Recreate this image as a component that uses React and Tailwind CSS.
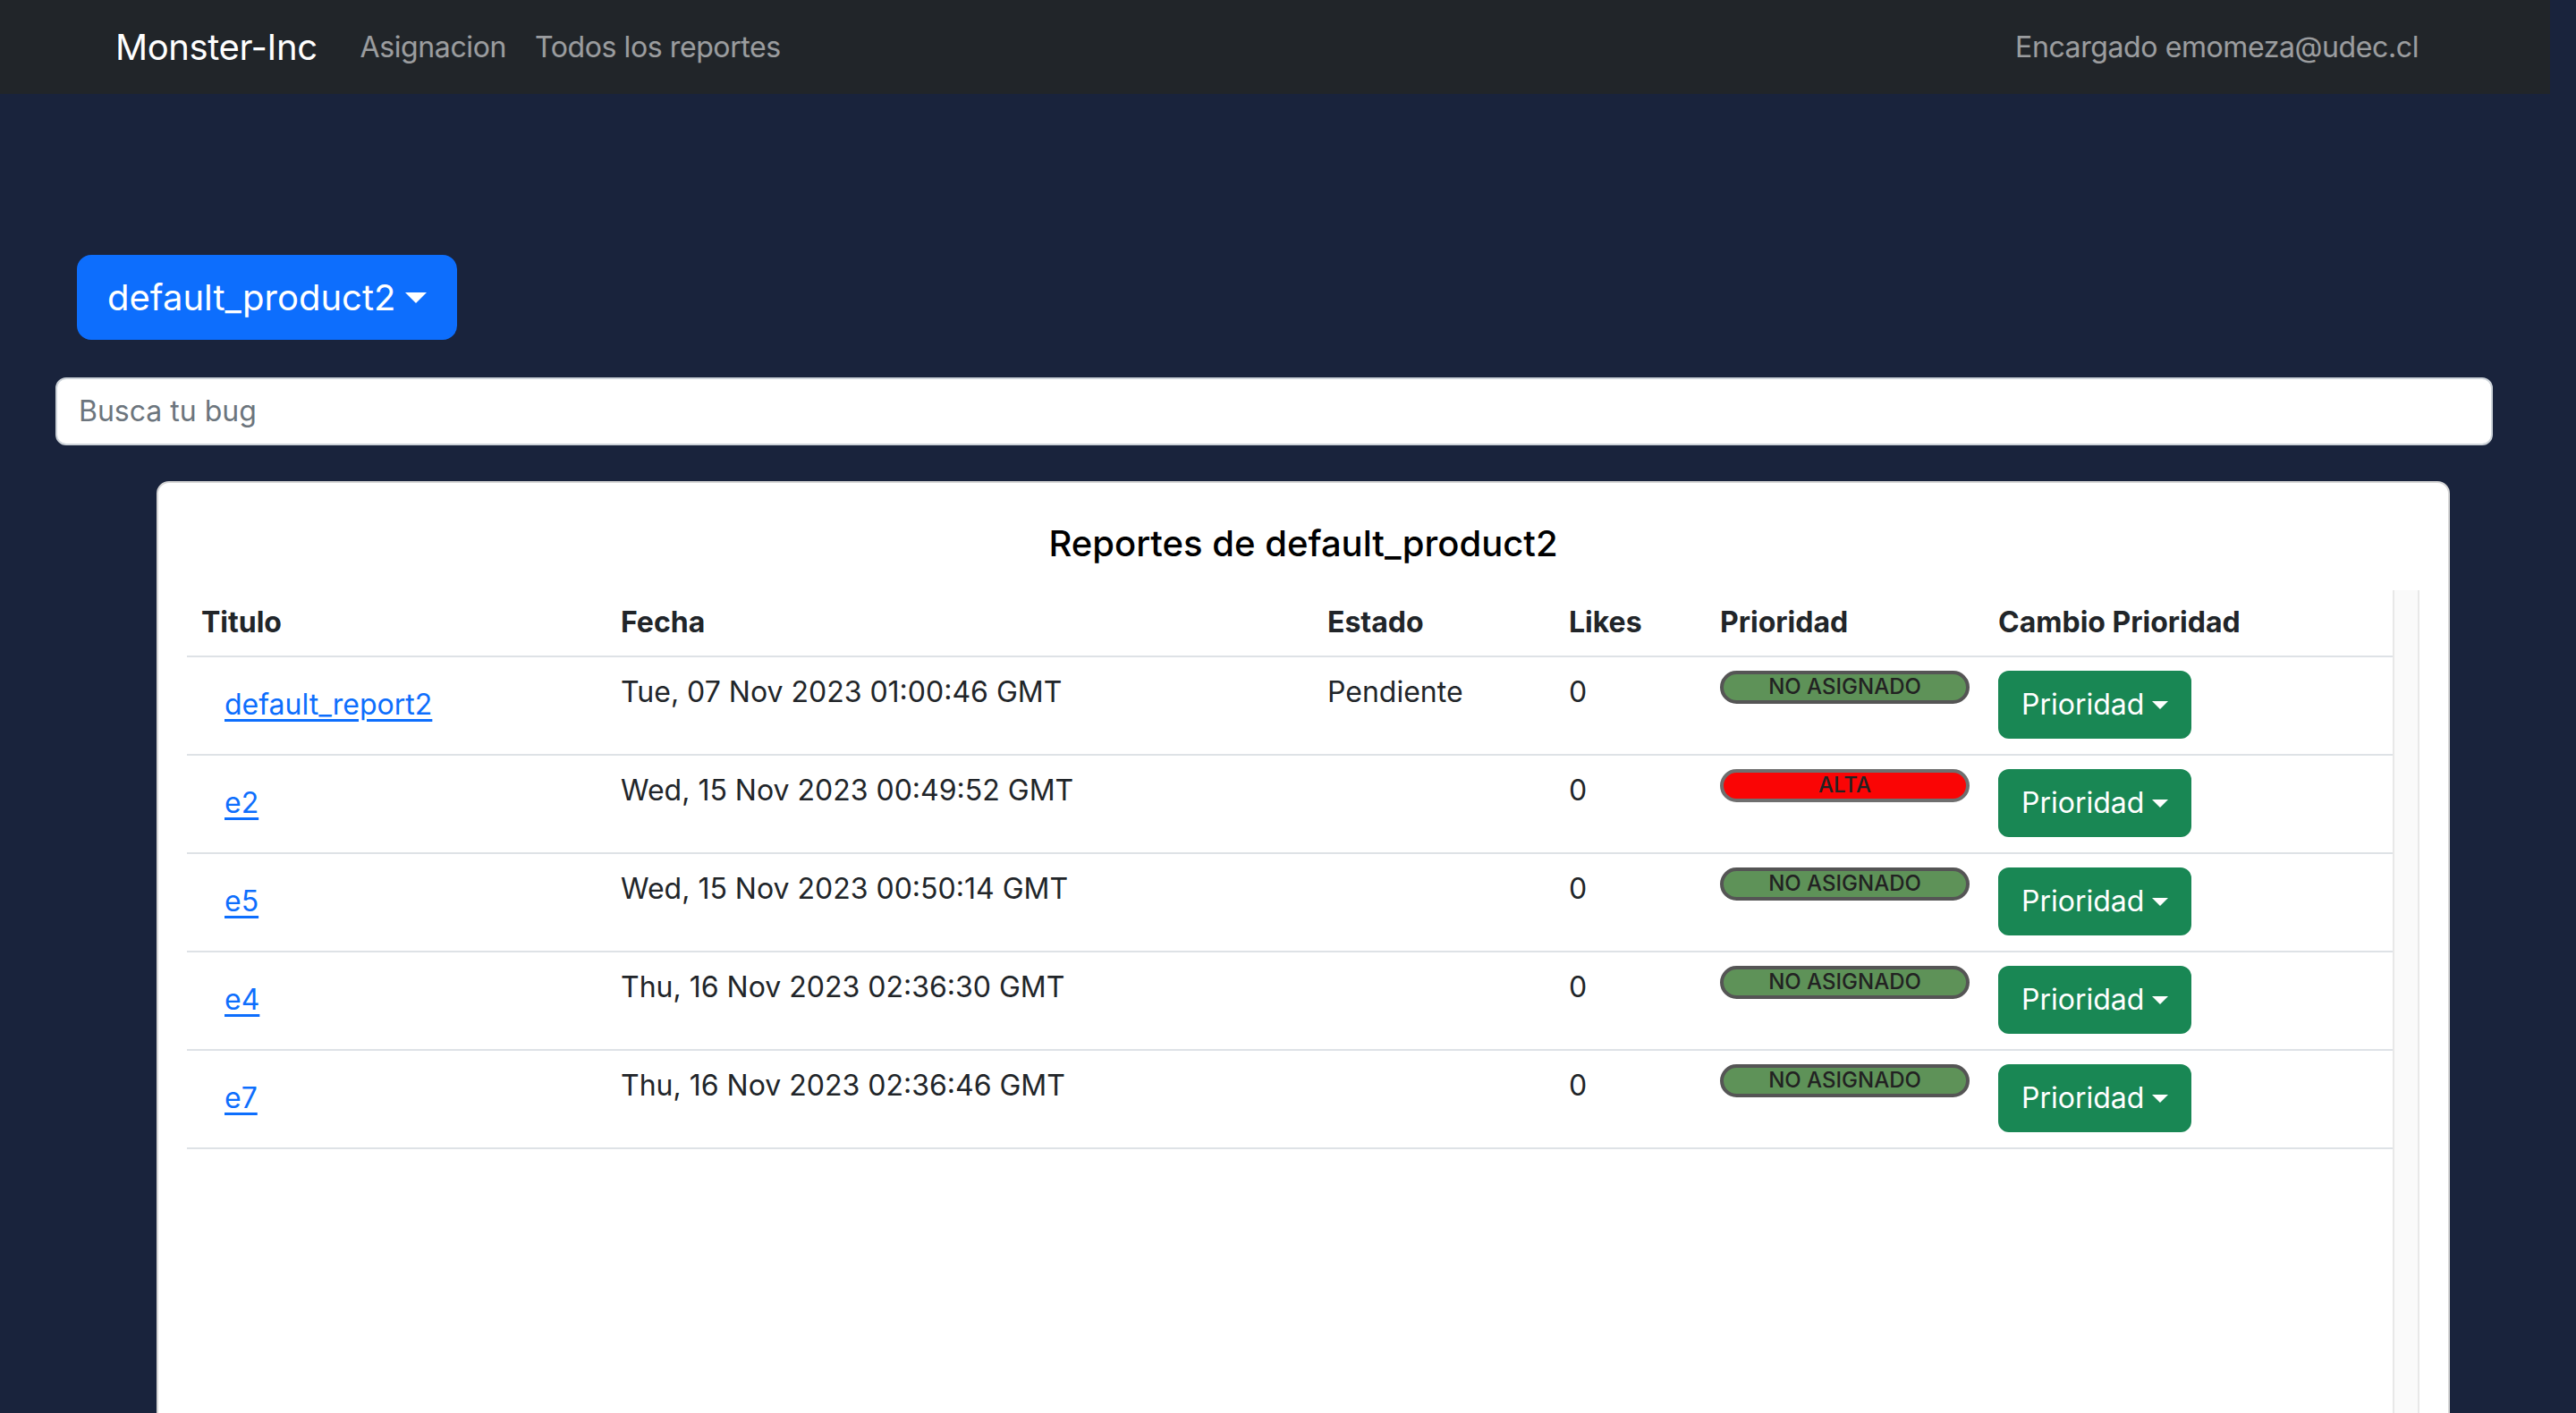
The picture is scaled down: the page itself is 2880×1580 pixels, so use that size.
import React from 'react';

const reports = [
  { title: 'default_report2', date: 'Tue, 07 Nov 2023 01:00:46 GMT', estado: 'Pendiente', likes: 0, prioridad: 'NO ASIGNADO' },
  { title: 'e2', date: 'Wed, 15 Nov 2023 00:49:52 GMT', estado: '', likes: 0, prioridad: 'ALTA' },
  { title: 'e5', date: 'Wed, 15 Nov 2023 00:50:14 GMT', estado: '', likes: 0, prioridad: 'NO ASIGNADO' },
  { title: 'e4', date: 'Thu, 16 Nov 2023 02:36:30 GMT', estado: '', likes: 0, prioridad: 'NO ASIGNADO' },
  { title: 'e7', date: 'Thu, 16 Nov 2023 02:36:46 GMT', estado: '', likes: 0, prioridad: 'NO ASIGNADO' },
];

function Caret() {
  return (
    <span className="ml-[0.255em] inline-block border-x-[0.3em] border-t-[0.3em] border-b-0 border-x-transparent border-t-current align-[0.255em]" />
  );
}

function PriorityBadge({ value }) {
  const alta = value === 'ALTA';
  return (
    <div
      className={
        alta
          ? 'flex h-[37px] w-[279px] items-center justify-center rounded-full border-[4px] border-[#6f6f6f] bg-[#fa0505] pb-[2px] text-[24px] font-medium leading-none text-[#222]'
          : 'flex h-[37px] w-[279px] items-center justify-center rounded-full border-[4px] border-[#555555] bg-[#5e9258] pb-[2px] text-[24px] font-medium leading-none text-[#222]'
      }
    >
      {value}
    </div>
  );
}

export default function App() {
  return (
    <div className="min-h-screen bg-[#19233c] font-['Inter','Liberation_Sans',sans-serif] text-[32px] leading-[1.5] text-[#212529]">
      <nav className="flex h-[105px] w-[2851px] items-center bg-[#212529] pl-[129px] pr-[131px] tracking-[-0.4px]">
        <span className="mr-[32px] text-[40px] text-white">Monster-Inc</span>
        <a className="px-[16px] text-white/55">Asignacion</a>
        <a className="px-[16px] text-white/55">Todos los reportes</a>
        <span className="ml-auto px-[16px] text-white/55">Encargado emomeza@udec.cl</span>
      </nav>

      <div className="pt-[180px]">
        <button className="ml-[86px] flex h-[95px] items-center rounded-[16px] border-2 border-[#0d6efd] bg-[#0d6efd] px-[32px] text-[40px] text-white">
          default_product2
          <Caret />
        </button>

        <div className="ml-[62px] mt-[42px] flex h-[76px] w-[2725px] items-center rounded-[12px] border-2 border-[#ced4da] bg-white px-[24px] text-[#6c757d]">
          Busca tu bug
        </div>

        <div className="ml-[175px] mt-[40px] h-[1200px] w-[2564px] rounded-[14px] border-2 border-[#d6d6d6] bg-white px-[32px] pt-[44px]">
          <h5 className="text-center text-[40px] font-medium leading-[1.2] text-black">Reportes de default_product2</h5>

          <div className="mt-[28px] flex h-[1000px]">
            <table className="h-fit w-[2466px] table-fixed border-collapse">
              <colgroup>
                <col className="w-[469px]" />
                <col className="w-[790px]" />
                <col className="w-[270px]" />
                <col className="w-[169px]" />
                <col className="w-[311px]" />
                <col className="w-[457px]" />
              </colgroup>
              <thead>
                <tr className="border-b-2 border-[#dee2e6] text-left font-bold">
                  <th className="px-[16px] pt-[12px] pb-[13px]">Titulo</th>
                  <th className="px-[16px] pt-[12px] pb-[13px]">Fecha</th>
                  <th className="px-[16px] pt-[12px] pb-[13px]">Estado</th>
                  <th className="px-[16px] pt-[12px] pb-[13px]">Likes</th>
                  <th className="px-[16px] pt-[12px] pb-[13px]">Prioridad</th>
                  <th className="px-[16px] pt-[12px] pb-[13px]">Cambio Prioridad</th>
                </tr>
              </thead>
              <tbody>
                {reports.map((r) => (
                  <tr key={r.title} className="border-b-2 border-[#dee2e6] align-top">
                    <td className="px-[16px] pt-[15px] pb-[17px]">
                      <a className="inline-block border-2 border-transparent px-[24px] py-[12px] text-[#0d6efd] underline underline-offset-[5px]">
                        {r.title}
                      </a>
                    </td>
                    <td className="px-[16px] pt-[15px] pb-[17px]">{r.date}</td>
                    <td className="px-[16px] pt-[15px] pb-[17px]">{r.estado}</td>
                    <td className="px-[16px] pt-[15px] pb-[17px]">{r.likes}</td>
                    <td className="px-[16px] pt-[15px] pb-[17px]">
                      <PriorityBadge value={r.prioridad} />
                    </td>
                    <td className="px-[16px] pt-[15px] pb-[17px]">
                      <button className="flex h-[76px] items-center rounded-[12px] border-2 border-[#198754] bg-[#198754] px-[24px] text-white">
                        Prioridad
                        <Caret />
                      </button>
                    </td>
                  </tr>
                ))}
              </tbody>
            </table>
            <div className="w-[30px] border-x-2 border-[#e8e8e8] bg-[#fafafa]" />
          </div>
        </div>
      </div>
    </div>
  );
}
